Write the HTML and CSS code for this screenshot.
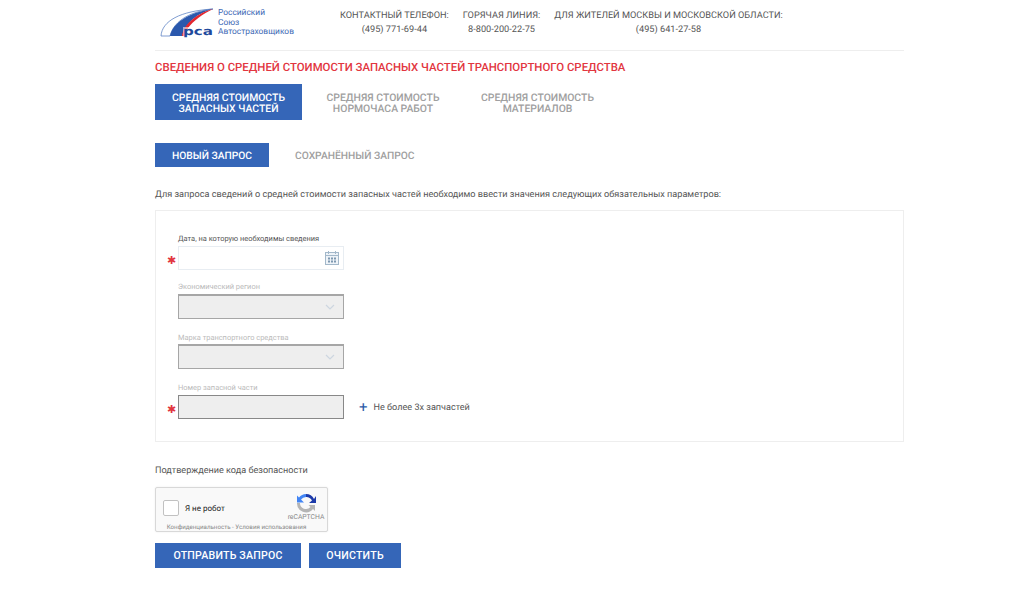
FILE: index.html
```html
<!DOCTYPE html>
<html lang="ru">
<head>
<meta charset="utf-8">
<title>Сведения о средней стоимости</title>
<link rel="stylesheet" href="styles.css">
</head>
<body>
<div class="page">
  <header class="header">
    <div class="brand">
      <svg class="logo" width="54" height="30" viewBox="0 0 54 30">
        <path d="M1 28C2 13 20 3 53 1C32 3 14 12 10 28Z" fill="#fff" stroke="#4a74bd" stroke-width=".7"/>
        <path d="M10 28C13 14 30 4 53 1C38 5 26 14 22 28Z" fill="#2a58ad"/>
        <path d="M22 28C24 15 38 5 53 1C43 6 33 13 28 20L26 28Z" fill="#e3262e"/>
        <rect x="23" y="19" width="30" height="10" fill="#fff" opacity=".55"/>
        <text class="logo-text" x="23" y="27" textLength="30" lengthAdjust="spacingAndGlyphs">рса</text>
      </svg>
      <div class="brand-name">Российский<br>Союз<br>Автостраховщиков</div>
    </div>
    <div class="contact contact-a">КОНТАКТНЫЙ ТЕЛЕФОН:<span>(495) 771-69-44</span></div>
    <div class="contact contact-b">ГОРЯЧАЯ ЛИНИЯ:<span>8-800-200-22-75</span></div>
    <div class="contact">ДЛЯ ЖИТЕЛЕЙ МОСКВЫ И МОСКОВСКОЙ ОБЛАСТИ:<span>(495) 641-27-58</span></div>
  </header>

  <h1 class="title">СВЕДЕНИЯ О СРЕДНЕЙ СТОИМОСТИ ЗАПАСНЫХ ЧАСТЕЙ ТРАНСПОРТНОГО СРЕДСТВА</h1>

  <nav class="tabs">
    <div class="tab tab-active">СРЕДНЯЯ СТОИМОСТЬ<br>ЗАПАСНЫХ ЧАСТЕЙ</div>
    <div class="tab">СРЕДНЯЯ СТОИМОСТЬ<br>НОРМОЧАСА РАБОТ</div>
    <div class="tab">СРЕДНЯЯ СТОИМОСТЬ<br>МАТЕРИАЛОВ</div>
  </nav>

  <nav class="subtabs">
    <div class="subtab subtab-active">НОВЫЙ ЗАПРОС</div>
    <div class="subtab">СОХРАНЁННЫЙ ЗАПРОС</div>
  </nav>

  <p class="intro">Для запроса сведений о средней стоимости запасных частей необходимо ввести значения следующих обязательных параметров:</p>

  <section class="panel">
    <div class="field field-date">
      <label class="label">Дата, на которую необходимы сведения</label>
      <div class="control-row">
        <span class="star">✱</span>
        <div class="control control-date">
          <svg width="14" height="14" viewBox="0 0 14 14">
            <rect x=".5" y="1.500" width="13" height="12" fill="#eef3f8" stroke="#a3b8ca"/>
            <path d="M3.500 0V3M10.500 0V3M1 4.500H13" stroke="#a3b8ca"/>
            <path d="M3 6.500h2v2H3zM6 6.500h2v2H6zM9 6.500h2v2H9zM3 9.500h2v2H3zM6 9.500h2v2H6zM9 9.500h2v2H9z" fill="#7d98b0"/>
          </svg>
        </div>
      </div>
    </div>
    <div class="field field-region">
      <label class="label label-off">Экономический регион</label>
      <div class="control-row">
        <div class="control control-off">
          <svg width="10" height="6" viewBox="0 0 10 6"><path d="M1 1L5 5L9 1" fill="none" stroke="#cdd6e0" stroke-width="1.200"/></svg>
        </div>
      </div>
    </div>
    <div class="field field-mark">
      <label class="label label-off">Марка транспортного средства</label>
      <div class="control-row">
        <div class="control control-off">
          <svg width="10" height="6" viewBox="0 0 10 6"><path d="M1 1L5 5L9 1" fill="none" stroke="#cdd6e0" stroke-width="1.200"/></svg>
        </div>
      </div>
    </div>
    <div class="field field-part">
      <label class="label label-off">Номер запасной части</label>
      <div class="control-row">
        <span class="star">✱</span>
        <div class="control control-off control-dark"></div>
        <div class="add"><span class="plus">+</span>Не более 3х запчастей</div>
      </div>
    </div>
  </section>

  <p class="confirm">Подтверждение кода безопасности</p>

  <div class="captcha">
    <div class="captcha-main">
      <span class="checkbox"></span>
      <span class="robot">Я не робот</span>
      <div class="captcha-brand">
        <svg width="20" height="20" viewBox="0 0 20 20">
          <path d="M10 1A9 9 0 0 1 18 6L20 3V10H13L16 7.500A6.500 6.500 0 0 0 10 4Z" fill="#1c3aa9"/>
          <path d="M10 1V4A6.500 6.500 0 0 0 5 6.500L8 9.500H1V2.500L3 4.500A9 9 0 0 1 10 1Z" fill="#4285f4"/>
          <path d="M1 10H4A6 6 0 0 0 14.500 14L12.500 12H19V18L17 16A9 9 0 0 1 1 10Z" fill="#b5b5b5"/>
        </svg>
        <span>reCAPTCHA</span>
      </div>
    </div>
    <div class="captcha-links">Конфиденциальность - Условия использования</div>
  </div>

  <div class="actions">
    <button class="btn btn-send" type="button">ОТПРАВИТЬ ЗАПРОС</button>
    <button class="btn btn-clear" type="button">ОЧИСТИТЬ</button>
  </div>
</div>
</body>
</html>
```
FILE: styles.css
```css
* { box-sizing: border-box; }
html, body { margin: 0; padding: 0; background: #fff; }
body { font-family: Roboto, "Liberation Sans", sans-serif; color: #555; overflow: hidden; height: 590px; text-rendering: geometricPrecision; }
.page { width: 749px; margin-left: 155px; }

.header { height: 51px; border-bottom: 1px solid #eee; display: flex; align-items: flex-start; }
.brand { display: flex; width: 185px; padding: 8px 0 0 5px; }
.logo { flex: none; }
.logo-text { font-family: "DejaVu Sans", sans-serif; font-size: 11px; font-weight: 700; fill: #1f4a9c; }
.brand-name { font-size: 8.400px; line-height: 9.500px; color: #3c68b5; margin-left: 4px; padding-top: 1px; white-space: nowrap; }
.contact { font-size: 9.200px; line-height: 14px; padding-top: 9px; text-align: center; color: #555; white-space: nowrap; }
.contact span { display: block; }
.contact-a { margin-right: 14px; }
.contact-b { margin-right: 14px; }

.title { margin: 9px 0 0; font-size: 11.400px; line-height: 14px; font-weight: 500; color: #e2363f; white-space: nowrap; }

.tabs { display: flex; margin-top: 10px; }
.tab { width: 147px; height: 36px; font-size: 10.400px; line-height: 11px; font-weight: 500; color: #a0a0a0; text-align: center; padding-top: 8px; margin-right: 7.500px; white-space: nowrap; }
.tab-active { background: #3566b8; color: #fff; }

.subtabs { display: flex; margin-top: 23px; }
.subtab { height: 24px; line-height: 25px; font-size: 10.250px; font-weight: 500; color: #a0a0a0; margin-right: 26px; white-space: nowrap; }
.subtab-active { width: 114px; background: #3566b8; color: #fff; text-align: center; }

.intro { margin: 22px 0 0; font-size: 9.150px; line-height: 12px; color: #555; white-space: nowrap; }

.panel { margin-top: 9px; height: 232px; border: 1px solid #eee; padding: 23px 0 0 22px; }
.field { width: 300px; }
.field-region { margin-top: 12px; }
.field-mark { margin-top: 14px; }
.field-mark .label { margin-bottom: 1px; }
.field-part { margin-top: 14px; }
.label { display: block; font-size: 7.450px; line-height: 10px; color: #555; margin-bottom: 2px; white-space: nowrap; }
.label-off { color: #bbb; }
.control-row { display: flex; align-items: center; position: relative; }
.star { position: absolute; left: -11px; top: 7px; font-family: "DejaVu Sans", sans-serif; font-size: 11px; line-height: 16px; color: #e2363f; }
.control { width: 166px; height: 25px; flex: none; display: flex; align-items: center; justify-content: flex-end; padding-right: 8px; }
.control-date { height: 24px; border: 1px solid #e8edf2; padding-right: 4px; }
.control-off { background: #eee; border: 1px solid #a6a6a6; border-width: 2px 1px 1px 1px; }
.control-dark { height: 24px; border-color: #888; border-width: 1.500px; }
.add { display: flex; align-items: center; margin: 1px 0 0 15px; font-size: 9.100px; color: #555; white-space: nowrap; }
.plus { font-size: 15px; line-height: 15px; color: #2b5aa8; margin-right: 6px; }

.confirm { margin: 23px 0 0; font-size: 9.100px; line-height: 12px; color: #555; }

.captcha { width: 173px; height: 45px; margin-top: 10px; background: #f9f9f9; border: 1px solid #d8d8d8; border-radius: 2px; box-shadow: 0 0 2px rgba(0,0,0,.08); overflow: hidden; }
.captcha-main { display: flex; height: 35px; position: relative; padding: 6px 0 0 7px; }
.checkbox { width: 16px; height: 16px; background: #fff; border: 1px solid #c1c1c1; border-radius: 2px; margin-top: 6px; flex: none; }
.robot { font-size: 8px; line-height: 16px; color: #222; margin: 7px 0 0 6px; white-space: nowrap; }
.captcha-brand { position: absolute; right: 1px; top: 5px; width: 40px; display: flex; flex-direction: column; align-items: center; font-size: 6.800px; line-height: 8px; color: #888; }
.captcha-brand span { white-space: nowrap; }
.captcha-links { font-size: 6.200px; line-height: 8px; color: #888; text-align: center; padding-right: 10px; white-space: nowrap; }

.actions { display: flex; gap: 8px; margin-top: 11px; }
.btn { height: 25px; background: #3566b8; color: #fff; border: 0; padding: 0; font-family: inherit; font-size: 10.600px; font-weight: 500; letter-spacing: .02em; }
.btn-send { width: 146px; }
.btn-clear { width: 92px; }
```
